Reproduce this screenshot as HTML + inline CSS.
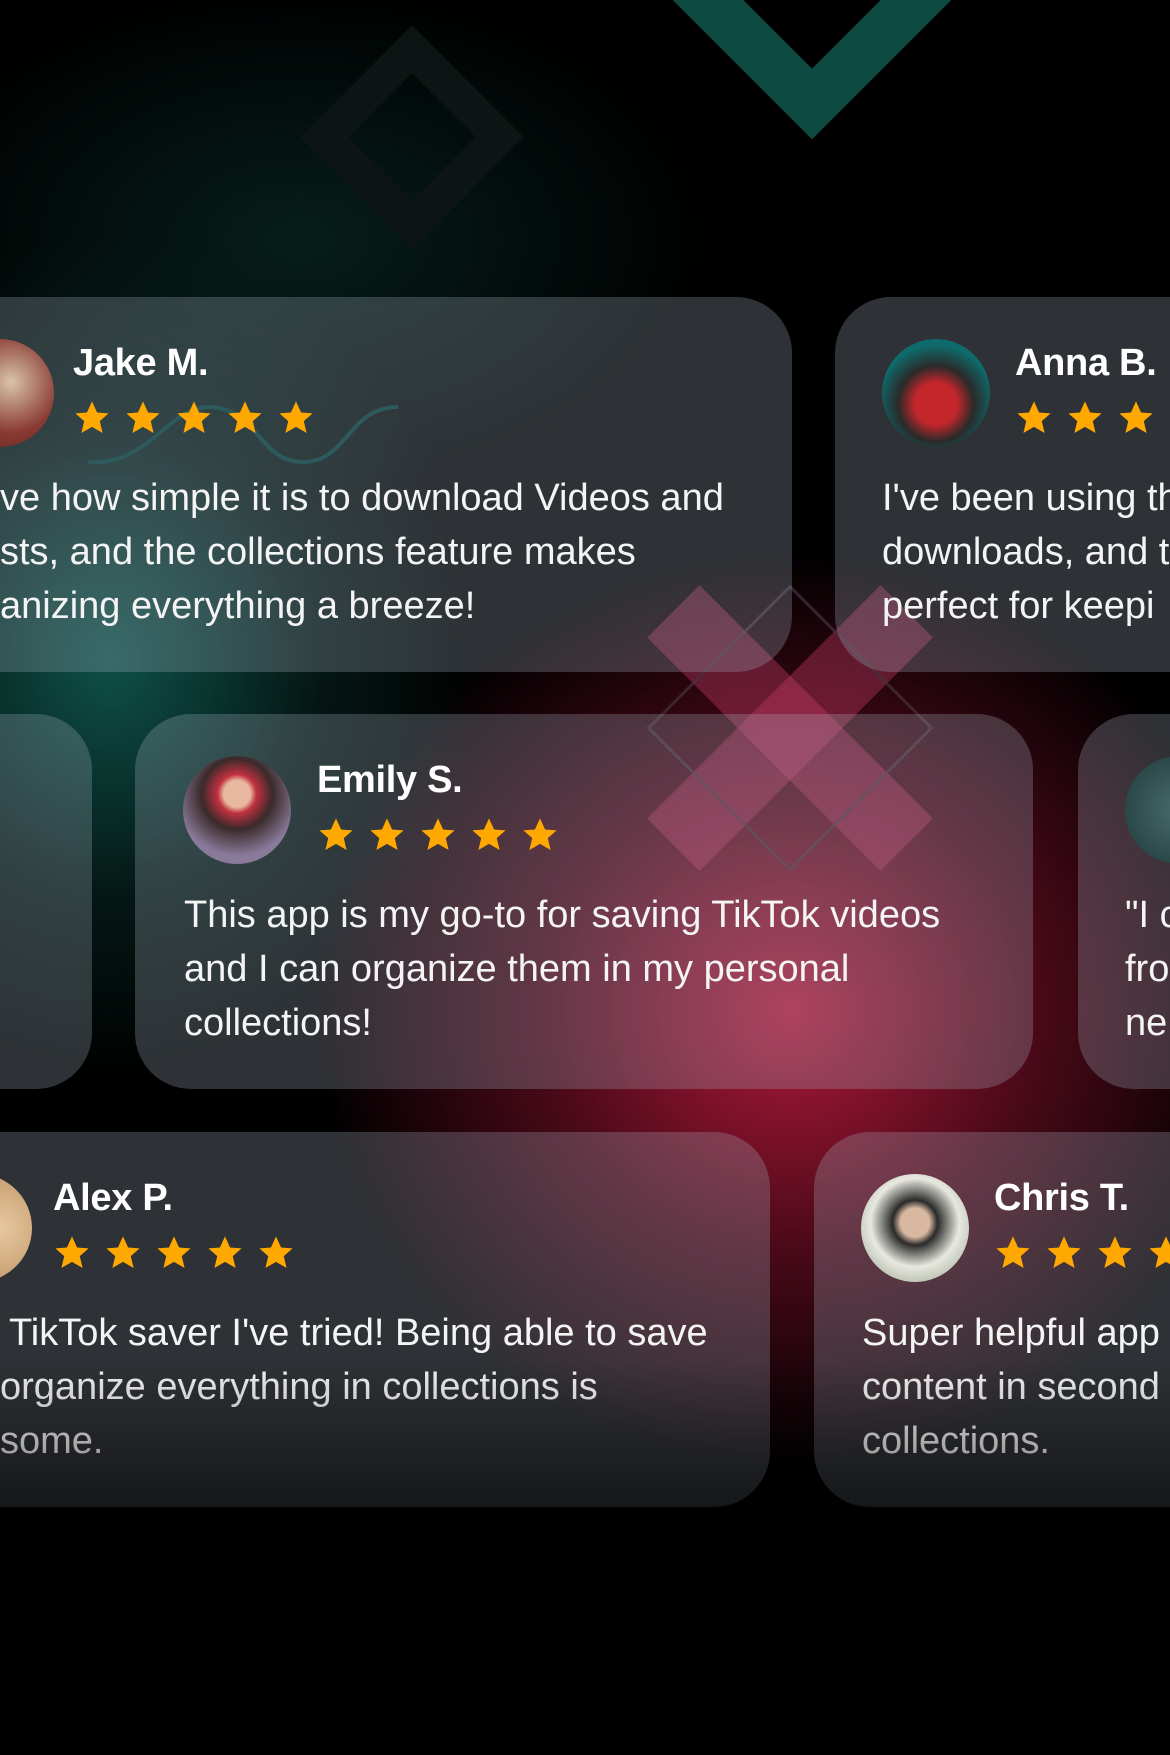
<!DOCTYPE html>
<html><head><meta charset="utf-8"><style>
*{margin:0;padding:0;box-sizing:border-box}
body{width:1170px;height:1755px;overflow:hidden;background:#000;position:relative;font-family:"Liberation Sans",sans-serif}
.bg{position:absolute;inset:0;background:
radial-gradient(ellipse 560px 540px at 790px 1010px,rgba(175,25,60,1),rgba(120,15,40,0.6) 45%,rgba(0,0,0,0) 85%),
radial-gradient(ellipse 420px 480px at 110px 660px,rgba(15,85,75,0.95),rgba(10,50,45,0.45) 50%,rgba(0,0,0,0) 88%),
radial-gradient(ellipse 520px 320px at 300px 240px,rgba(10,50,45,0.6),rgba(0,0,0,0) 80%),#000}
.card{position:absolute;height:375px;border-radius:56px;background:rgba(170,180,195,0.27);overflow:hidden;color:#fff}
.av{position:absolute;top:42px;width:108px;height:108px;border-radius:50%}
.nm{position:absolute;top:47px;font-size:38px;line-height:1;font-weight:bold;letter-spacing:-0.3px}
.st{position:absolute;top:102px;display:flex;gap:13px}
.st svg{width:38px;height:38px}
.tx{position:absolute;top:174px;font-size:38px;line-height:54px;white-space:nowrap;color:#f4f4f4}
.fade{position:absolute;left:0;right:0;top:1360px;height:395px;background:linear-gradient(rgba(0,0,0,0),rgba(0,0,0,0.5) 35%,#000 70%)}
</style></head><body>
<div class="bg"></div>
<svg width="1170" height="1755" style="position:absolute;left:0;top:0">
<path d="M690 -18 L812 104 L934 -18" stroke="#0c4a42" stroke-width="50" fill="none"/>
<rect x="350" y="75" width="124" height="124" transform="rotate(45 412 137)" fill="none" stroke="#0c1513" stroke-width="34"/>
<g transform="rotate(45 790 728)" fill="rgba(200,60,105,0.38)">
<rect x="625" y="691" width="330" height="74"/><rect x="753" y="563" width="74" height="330"/>
</g>
<rect x="690" y="628" width="200" height="200" transform="rotate(45 790 728)" fill="none" stroke="rgba(70,50,60,0.7)" stroke-width="3"/>
</svg>
<!-- row 1 -->
<div class="card" style="left:-102px;top:297px;width:894px">
<div class="av" style="left:48px;background:radial-gradient(circle at 60% 40%,#d9c4a8,#8a3a33 55%,#5a2020)"></div>
<svg style="position:absolute;left:190px;top:100px" width="320" height="80"><path d="M0 65 C60 70 80 10 120 10 C170 10 170 65 215 65 C260 65 260 10 310 10" stroke="#2d5a5c" stroke-width="4" fill="none"/></svg>
<div class="nm" style="left:175px">Jake M.</div>
<div class="st" style="left:175px"></div>
<div class="tx" style="left:102px">ve how simple it is to download Videos and<br>sts, and the collections feature makes<br>anizing everything a breeze!</div>
</div>
<div class="card" style="left:835px;top:297px;width:500px">
<div class="av" style="left:47px;background:radial-gradient(circle at 50% 60%,#c3262b 25%,#2a2a2a 45%,#0f6b6b 70%)"></div>
<div class="nm" style="left:180px">Anna B.</div>
<div class="st" style="left:180px"></div>
<div class="tx" style="left:47px">I've been using th<br>downloads, and t<br>perfect for keepi</div>
</div>
<!-- row 2 -->
<div class="card" style="left:-400px;top:714px;width:492px"></div>
<div class="card" style="left:135px;top:714px;width:898px">
<div class="av" style="left:48px;background:radial-gradient(circle at 50% 35%,#e8b9a0 15%,#c03040 22%,#3a2a2a 40%,#8a7a9a 70%)"></div>
<div class="nm" style="left:182px">Emily S.</div>
<div class="st" style="left:182px"></div>
<div class="tx" style="left:49px">This app is my go-to for saving TikTok videos<br>and I can organize them in my personal<br>collections!</div>
</div>
<div class="card" style="left:1078px;top:714px;width:400px">
<div class="av" style="left:47px;background:radial-gradient(circle,#4a6a6a,#1d3a3a)"></div>
<div class="tx" style="left:47px">"I c<br>fro<br>ne</div>
</div>
<!-- row 3 -->
<div class="card" style="left:-124px;top:1132px;width:894px">
<div class="av" style="left:48px;background:radial-gradient(circle at 70% 50%,#e8c9a0,#b08050)"></div>
<div class="nm" style="left:177px">Alex P.</div>
<div class="st" style="left:177px"></div>
<div class="tx" style="left:133px">TikTok saver I've tried! Being able to save<br><span style="margin-left:-9px">organize everything in collections is</span><br><span style="margin-left:-9px">some.</span></div>
</div>
<div class="card" style="left:814px;top:1132px;width:500px">
<div class="av" style="left:47px;background:radial-gradient(circle at 50% 45%,#d8b8a0 18%,#2a2a2a 28%,#e8e8e0 55%,#8a9a80)"></div>
<div class="nm" style="left:180px">Chris T.</div>
<div class="st" style="left:180px"></div>
<div class="tx" style="left:48px">Super helpful app<br>content in second<br>collections.</div>
</div>
<div class="fade"></div>
<script>
var s='<svg viewBox="0 0 24 24"><path d="M12 1.5l3.2 7 7.3.6-5.6 4.9 1.8 7.5L12 17.6 5.3 21.5l1.8-7.5L1.5 9.1l7.3-.6z" fill="#FFA800"/></svg>';
document.querySelectorAll('.st').forEach(function(e){e.innerHTML=s+s+s+s+s});
</script>
</body></html>
